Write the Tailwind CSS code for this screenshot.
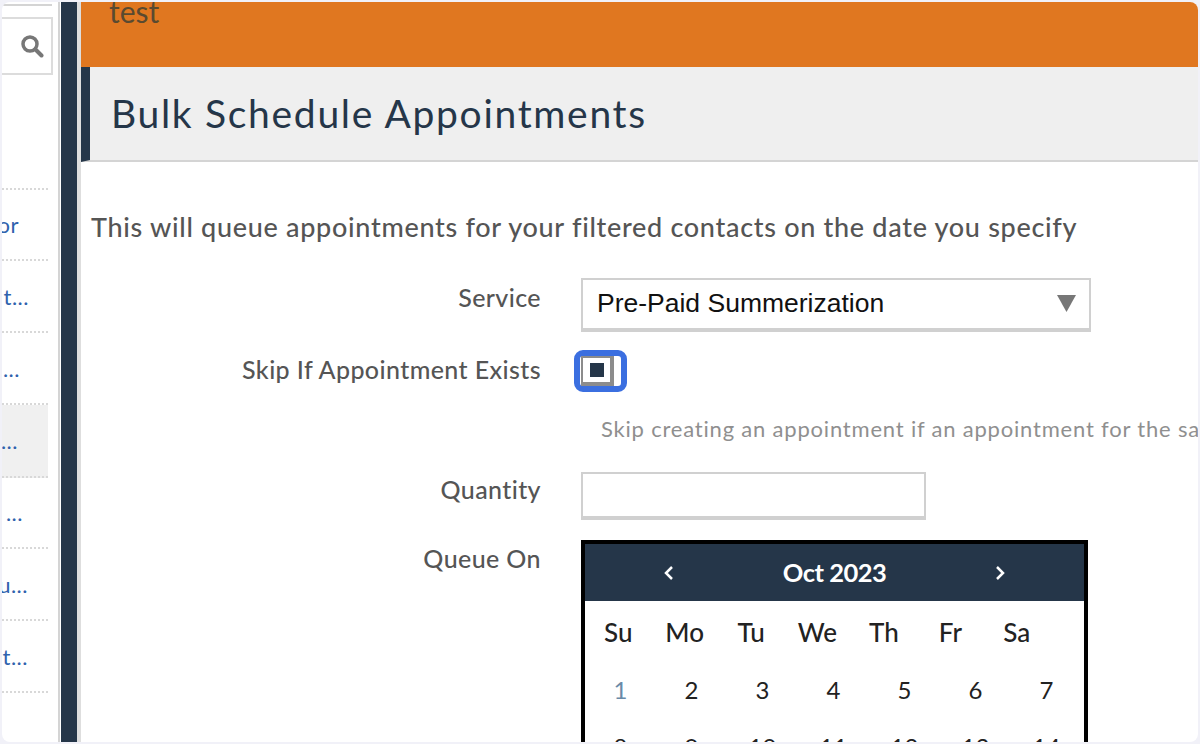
<!DOCTYPE html>
<html lang="en">
<head>
    <meta charset="UTF-8">
    <title>Bulk Schedule Appointments</title>
    <script src="https://cdn.jsdelivr.net/npm/@tailwindcss/browser@4"></script>
</head>
<body class="bg-[#f1f1f8] overflow-hidden">
    <div class="h-[744px] w-[1200px] p-[2px] font-['Lato',sans-serif]">
        <div class="flex h-[740px] w-[1196px] overflow-hidden rounded-lg bg-white">

            <!-- sidebar, scrolled off to the left -->
            <aside class="w-[58px] shrink-0 border-r-2 border-[#d4d4d4] pr-[10px] text-[22px] tracking-[0.5px] text-[#2f62ad]">
                <div class="mt-[2px] h-[2px] w-[50px] bg-[#d4d4d4]"></div>
                <div class="-mr-[5px] mt-[11px] flex h-[58px] items-center justify-end border-2 border-l-0 border-[#dcdcdc] pr-[7px]">
                    <svg class="h-[24px] w-[24px]" viewBox="0 0 24 24" fill="none" stroke="#777" stroke-linecap="round">
                        <circle cx="10" cy="10" r="7" stroke-width="3.5"/>
                        <path d="M15.5 15.5l6 6" stroke-width="4"/>
                    </svg>
                </div>
                <div class="mt-[113px] border-t-2 border-dotted border-[#d8d8d8]"></div>
                <div class="flex h-[71px] items-center justify-end border-b-2 border-dotted border-[#d8d8d8] pr-[29px]">or</div>
                <div class="flex h-[72px] items-center justify-end border-b-2 border-dotted border-[#d8d8d8] pr-[19px]">t...</div>
                <div class="flex h-[72px] items-center justify-end border-b-2 border-dotted border-[#d8d8d8] pr-[28px]">...</div>
                <div class="flex h-[73px] items-center justify-end border-b-2 border-dotted border-[#d8d8d8] bg-[#f0f0f0] pr-[30px]">...</div>
                <div class="flex h-[71px] items-center justify-end border-b-2 border-dotted border-[#d8d8d8] pr-[25px]">...</div>
                <div class="flex h-[72px] items-center justify-end border-b-2 border-dotted border-[#d8d8d8] pr-[20px]">u...</div>
                <div class="flex h-[72px] items-center justify-end border-b-2 border-dotted border-[#d8d8d8] pr-[20px]">t...</div>
            </aside>

            <!-- navy strip -->
            <div class="ml-[1px] w-[16px] shrink-0 bg-[#253649]"></div>
            <div class="w-[4px] shrink-0 bg-[#dedede]"></div>

            <main class="min-w-0 flex-1 overflow-hidden">
                <div class="h-[65px] overflow-hidden bg-[#e07720] pl-[28px] text-[30px] leading-[18px] text-[#5a4a30]">test</div>
                <div class="flex h-[95px] items-center border-b-2 border-l-[9px] border-b-[#d4d4d4] border-l-[#253649] bg-[#efefef] pl-[21px] text-[39px] tracking-[1.700px] text-[#253649]">Bulk Schedule Appointments</div>

                <p class="mt-[48px] pl-[10px] text-[27px] font-medium leading-[34px] tracking-[0.7px] text-[#555]">This will queue appointments for your filtered contacts on the date you specify</p>

                <div class="mt-[34px] grid grid-cols-[460px_1fr] gap-x-[40px] text-[25px] font-medium tracking-[0.4px] text-[#555]">
                    <label class="pt-[3px] text-right leading-[32px]">Service</label>
                    <div class="relative flex h-[54px] w-[510px] items-center border-2 border-b-4 border-[#d0d0d0] pl-[14px] font-['Liberation_Sans',sans-serif] text-[26.500px] font-normal tracking-normal text-[#111]">
                        Pre-Paid Summerization
                        <svg class="absolute top-[15px] right-[13px] h-[17px] w-[19px]" viewBox="0 0 19 17"><path d="M0 0h19l-9.500 17z" fill="#777"/></svg>
                    </div>

                    <label class="mt-[21px] text-right leading-[32px]">Skip If Appointment Exists</label>
                    <div class="-ml-[7px] mt-[18px] flex h-[42px] w-[53px] items-center rounded-[9px] border-[6px] border-[#3b6fe0] pl-[1px]">
                        <span class="flex h-[30px] w-[33px] items-center justify-center border-2 border-b-4 border-r-4 border-[#8c8c8c]">
                            <span class="h-[14px] w-[14px] bg-[#253649]"></span>
                        </span>
                    </div>

                    <div></div>
                    <p class="mt-[21px] whitespace-nowrap pl-[20px] text-[22px] font-normal leading-[32px] tracking-[0.8px] text-[#8f8f8f]">Skip creating an appointment if an appointment for the same service already exists</p>

                    <label class="mt-[28px] text-right leading-[32px]">Quantity</label>
                    <div class="mt-[27px] h-[48px] w-[345px] border-2 border-b-4 border-[#d0d0d0]"></div>

                    <label class="mt-[22px] text-right leading-[32px]">Queue On</label>
                    <div class="mt-[20px] w-[507px] border-4 border-black text-[24px] font-normal tracking-normal text-[#222]">
                        <div class="flex h-[57px] items-center justify-between bg-[#253649] pr-[79px] pl-[79px] text-white">
                            <svg class="h-[16px] w-[10px]" viewBox="0 0 10 16" fill="none" stroke="white" stroke-width="2.500"><path d="M8 2L2 8l6 6"/></svg>
                            <span class="text-[25.500px] font-bold tracking-[-0.5px]">Oct 2023</span>
                            <svg class="h-[16px] w-[10px]" viewBox="0 0 10 16" fill="none" stroke="white" stroke-width="2.500"><path d="M2 2l6 6-6 6"/></svg>
                        </div>
                        <div class="mt-[13px] grid w-[465px] grid-cols-7 text-center text-[26px] font-medium leading-[36px]">
                            <span>Su</span><span>Mo</span><span>Tu</span><span>We</span><span>Th</span><span>Fr</span><span>Sa</span>
                        </div>
                        <div class="mt-[22px] grid w-[497px] grid-cols-7 gap-y-[21px] text-center leading-[36px]">
                            <span class="text-[#6a8aa8]">1</span><span>2</span><span>3</span><span>4</span><span>5</span><span>6</span><span>7</span>
                            <span>8</span><span>9</span><span>10</span><span>11</span><span>12</span><span>13</span><span>14</span>
                        </div>
                    </div>
                </div>
            </main>
        </div>
    </div>
</body>
</html>
